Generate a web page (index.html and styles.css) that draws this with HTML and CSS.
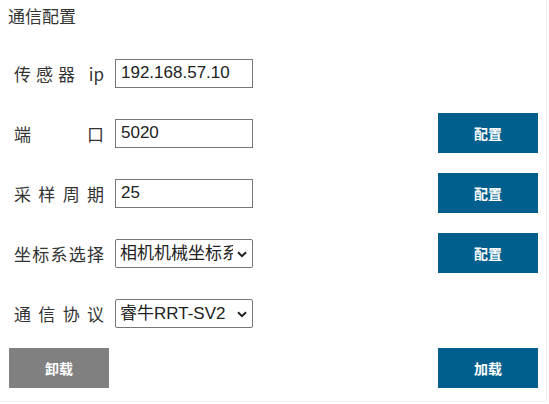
FILE: index.html
```html
<!DOCTYPE html>
<html lang="zh">
<head>
<meta charset="utf-8">
<title>通信配置</title>
<link rel="stylesheet" href="styles.css">
</head>
<body>
<div class="panel">
  <div class="title">通信配置</div>
  <div class="row">
    <label class="label">传感器 ip</label>
    <input class="field" type="text" value="192.168.57.10">
  </div>
  <div class="row">
    <label class="label">端口</label>
    <input class="field" type="text" value="5020">
    <button class="btn">配置</button>
  </div>
  <div class="row">
    <label class="label">采样周期</label>
    <input class="field" type="text" value="25">
    <button class="btn">配置</button>
  </div>
  <div class="row">
    <label class="label">坐标系选择</label>
    <span class="selwrap">
      <select class="field sel">
        <option>相机机械坐标系</option>
      </select>
      <svg class="chev" width="10" height="7" viewBox="0 0 10 7"><path d="M1 1.2 L5 5.2 L9 1.2" fill="none" stroke="#222" stroke-width="2"/></svg>
    </span>
    <button class="btn">配置</button>
  </div>
  <div class="row">
    <label class="label">通信协议</label>
    <span class="selwrap">
      <select class="field sel">
        <option>睿牛RRT-SV2</option>
      </select>
      <svg class="chev" width="10" height="7" viewBox="0 0 10 7"><path d="M1 1.2 L5 5.2 L9 1.2" fill="none" stroke="#222" stroke-width="2"/></svg>
    </span>
  </div>
  <div class="actions">
    <button class="btn btn-gray">卸载</button>
    <button class="btn">加载</button>
  </div>
</div>
</body>
</html>
```
FILE: styles.css
```css
html, body {
  margin: 0;
  padding: 0;
  background: #ffffff;
}
body {
  font-family: "Liberation Sans", "Noto Sans CJK SC", sans-serif;
  color: #333333;
}
.panel {
  width: 547px;
  height: 402px;
  box-sizing: border-box;
  border-right: 1px solid #efefef;
  border-bottom: 1px solid #efefef;
  padding: 4px 8px 0 8px;
  display: flex;
  flex-direction: column;
}
.title {
  font-family: "Noto Sans CJK SC", sans-serif;
  font-size: 17px;
  line-height: 23px;
  height: 29px;
  color: #333333;
}
.row {
  display: flex;
  align-items: center;
  height: 40px;
  margin-top: 20px;
}
.label {
  width: 90px;
  margin-left: 6px;
  margin-right: 11px;
  font-family: "Noto Sans CJK SC", sans-serif;
  font-size: 17px;
  text-align: justify;
  text-align-last: justify;
  color: #333333;
  white-space: nowrap;
}
.field {
  width: 138px;
  height: 29px;
  box-sizing: border-box;
  border: 1px solid #767676;
  border-radius: 0;
  padding: 0 4px 0 5px;
  font-family: "Liberation Sans", "Noto Sans CJK SC", sans-serif;
  font-size: 17px;
  color: #222222;
  background: #ffffff;
  margin: 0;
}
.selwrap {
  position: relative;
  display: block;
  width: 138px;
  height: 29px;
}
.sel {
  display: block;
  appearance: none;
  -webkit-appearance: none;
  padding: 0 19px 0 4px;
  border-radius: 2px;
}
.chev {
  position: absolute;
  right: 6px;
  top: 12px;
  pointer-events: none;
}
.btn {
  width: 100px;
  height: 40px;
  border: none;
  margin: 0 0 0 auto;
  padding: 0;
  background: #005f8d;
  color: #ffffff;
  font-family: "Noto Sans CJK SC", sans-serif;
  font-weight: bold;
  font-size: 14px;
}
.btn-gray {
  background: #808080;
  margin: 0;
}
.actions {
  display: flex;
  justify-content: space-between;
  margin-top: 15px;
  padding-left: 1px;
}
```
